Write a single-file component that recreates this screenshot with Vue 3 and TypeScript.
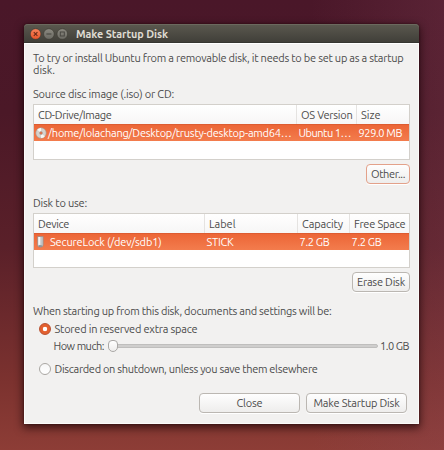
<script setup lang="ts">
import { ref, type Directive } from 'vue'

// Tracks a label so that its text spans the given width in pixels.
const vFit: Directive<HTMLElement, number> = {
  mounted(el, { value }) {
    const natural = el.getBoundingClientRect().width
    const count = (el.textContent ?? '').length
    if (count > 1) el.style.letterSpacing = `${(value - natural) / count}px`
  },
}

interface Cell { text: string; width: number }
interface Table { name: string; heads: Cell[]; row: Cell[] }

const images: Table = {
  name: 'images',
  heads: [
    { text: 'CD-Drive/Image', width: 73.5 },
    { text: 'OS Version', width: 51.5 },
    { text: 'Size', width: 19.5 },
  ],
  row: [
    { text: '/home/lolachang/Desktop/trusty-desktop-amd64…', width: 243.5 },
    { text: 'Ubuntu 1…', width: 52.5 },
    { text: '929.0 MB', width: 43.5 },
  ],
}
const disks: Table = {
  name: 'disks',
  heads: [
    { text: 'Device', width: 31 },
    { text: 'Label', width: 26.5 },
    { text: 'Capacity', width: 41 },
    { text: 'Free Space', width: 51.5 },
  ],
  row: [
    { text: 'SecureLock (/dev/sdb1)', width: 111.5 },
    { text: 'STICK', width: 27 },
    { text: '7.2 GB', width: 30 },
    { text: '7.2 GB', width: 30 },
  ],
}
const storage = ref<'stored' | 'discarded'>('stored')
</script>

<template>
  <div class="desktop">
    <main class="window">
      <header class="titlebar">
        <svg class="controls" width="38" height="12" viewBox="0 0 38 12">
          <defs>
            <linearGradient id="closeFill" x1="0" y1="0" x2="0" y2="1">
              <stop offset="0" stop-color="#f8845c" /><stop offset="1" stop-color="#ea552a" />
            </linearGradient>
            <linearGradient id="dimFill" x1="0" y1="0" x2="0" y2="1">
              <stop offset="0" stop-color="#8b8980" /><stop offset="1" stop-color="#6b6a63" />
            </linearGradient>
          </defs>
          <circle cx="5.6" cy="6" r="5.3" fill="url(#closeFill)" stroke="#38332d" stroke-width=".5" />
          <path d="M3.8 4.2l3.6 3.6M7.4 4.2L3.8 7.8" stroke="#6b2a18" stroke-width="1.1" />
          <circle cx="18.9" cy="6" r="5.3" fill="url(#dimFill)" stroke="#38372f" stroke-width=".5" />
          <path d="M16.4 6h5" stroke="#484741" stroke-width="1.1" />
          <circle cx="32.3" cy="6" r="5.3" fill="url(#dimFill)" stroke="#38372f" stroke-width=".5" />
          <rect x="30.3" y="4" width="4" height="4" fill="none" stroke="#484741" />
        </svg>
        <h1><span v-fit="92">Make Startup Disk</span></h1>
      </header>

      <section class="body">
        <p class="intro">
          <span v-fit="370.5">To try or install Ubuntu from a removable disk, it needs to be set up as a startup</span><br />
          <span v-fit="22">disk.</span>
        </p>

        <p class="caption source"><span v-fit="141">Source disc image (.iso) or CD:</span></p>
        <div class="table" :class="images.name">
          <div class="head">
            <div v-for="(c, i) in images.heads" :key="i" class="th"><span v-fit="c.width">{{ c.text }}</span></div>
          </div>
          <div class="row">
            <div v-for="(c, i) in images.row" :key="i" class="td">
              <svg v-if="i === 0" class="disc" width="12" height="12" viewBox="0 0 12 12">
                <circle cx="6" cy="6" r="5.2" fill="#d5d2cd" stroke="#a59c94" stroke-width=".6" />
                <path d="M6 6L2.2 2.6A5 5 0 0 1 6 1zM6 6l3.8 3.4A5 5 0 0 1 6 11z" fill="#f7f6f4" />
                <circle cx="6" cy="6" r="1.5" fill="#e8673c" stroke="#b5aaa2" stroke-width=".8" />
              </svg>
              <span v-fit="c.width">{{ c.text }}</span>
            </div>
          </div>
        </div>
        <div class="action other"><button class="focused"><span v-fit="34">Other...</span></button></div>

        <p class="caption"><span v-fit="54">Disk to use:</span></p>
        <div class="table" :class="disks.name">
          <div class="head">
            <div v-for="(c, i) in disks.heads" :key="i" class="th"><span v-fit="c.width">{{ c.text }}</span></div>
          </div>
          <div class="row">
            <div v-for="(c, i) in disks.row" :key="i" class="td">
              <svg v-if="i === 0" class="stick" width="7" height="12" viewBox="0 0 7 12">
                <path d="M.6.6h5.6v8.2Q6.200 11.200 3.400 11.200T.6 8.800z" fill="#c3c5c6" stroke="#8f8a87" stroke-width=".6" />
                <path d="M2.300 1v7.900" stroke="#f4f5f5" stroke-width="2" />
                <path d="M2 10h2.800" stroke="#626b72" stroke-width=".9" />
              </svg>
              <span v-fit="c.width">{{ c.text }}</span>
            </div>
          </div>
        </div>
        <div class="action erase"><button><span v-fit="48">Erase Disk</span></button></div>

        <p class="caption question"><span v-fit="298.5">When starting up from this disk, documents and settings will be:</span></p>
        <label class="option">
          <input v-model="storage" type="radio" value="stored" />
          <span v-fit="143">Stored in reserved extra space</span>
        </label>
        <div class="amount">
          <span v-fit="50.500">How much:</span>
          <div class="slider"><i class="knob"></i></div>
          <span v-fit="29">1.0 GB</span>
        </div>
        <label class="option discard">
          <input v-model="storage" type="radio" value="discarded" />
          <span v-fit="263">Discarded on shutdown, unless you save them elsewhere</span>
        </label>

        <footer>
          <button><span v-fit="26">Close</span></button>
          <button><span v-fit="86">Make Startup Disk</span></button>
        </footer>
      </section>
    </main>
  </div>
</template>

<style>
body { margin: 0; }
</style>

<style scoped>
* { box-sizing: border-box; }
.desktop {
  width: 444px;
  height: 450px;
  padding: 24px 0 0 24px;
  overflow: hidden;
  font: 11px/12px Ubuntu, "Noto Sans", sans-serif;
  color: #4c4c4c;
  background:
    linear-gradient(90deg, transparent 70%, rgba(145, 76, 96, .22)),
    linear-gradient(180deg, #4a1729 0%, #4b1827 25%, #5a2029 55%, #7c322f 85%, #8d3d36 100%);
}
.window {
  width: 395px;
  height: 400px;
  border-radius: 4px 4px 0 0;
  box-shadow: 0 3px 9px 1px rgba(20, 0, 5, .65), 0 0 2px rgba(20, 0, 5, .6);
}
.titlebar {
  display: flex;
  align-items: center;
  height: 19px;
  padding-left: 5.5px;
  border-radius: 4px 4px 0 0;
  border-bottom: 1px solid #353530;
  background: linear-gradient(#5b594f, #403f39);
  box-shadow: inset 0 1px #6b695e;
}
.controls { display: block; margin-top: 1px; }
h1 {
  margin: 1px 0 0 8.5px;
  font-size: 10.8px;
  line-height: 12px;
  font-weight: 700;
  color: #dfdbd2;
}
span { white-space: nowrap; display: inline-block; }
.body {
  height: 381px;
  padding: 8px 9px 0 8px;
  background: #f2f1f0;
  border: 1px solid #fbfbfa;
  border-top: 1px solid #fff;
}
.intro { margin: 0; height: 24px; }
.caption { margin: 0; height: 12px; }
.source { margin-top: 12px; }
.table {
  width: 377px;
  background: #fff;
  border: 1px solid #d3d0cb;
}
.images { height: 56px; margin-top: 4px; }
.disks { height: 55px; margin-top: 4px; }
.head, .row { display: grid; }
.images .head, .images .row { grid-template-columns: 262px 60px 1fr; }
.disks .head, .disks .row { grid-template-columns: 170px 93px 52px 1fr; }
.head { height: 19px; background: linear-gradient(#fff, #f7f6f6); }
.th { padding: 4px 0 0 4px; border-left: 1px solid #e5e3e1; }
.th:first-child { padding-left: 3px; border-left-color: transparent; }
.row {
  height: 17px;
  color: #fff;
  background: linear-gradient(#ec6637, #f37c4d);
  border-top: 1px solid #dd5c31;
}
.td { display: flex; align-items: flex-start; padding: 2px 0 0 2.5px; }
.td:first-child { padding-left: .5px; }
.disc { margin: 0 1.500px 0 0; }
.stick { margin: 0 6px 0 2.500px; }
.action { display: flex; justify-content: flex-end; width: 377px; }
button {
  display: flex;
  align-items: center;
  justify-content: center;
  height: 20px;
  padding: 0;
  font: inherit;
  color: inherit;
  border: 1px solid #bbb7b2;
  border-radius: 4px;
  background: linear-gradient(#fefefe, #eeedec);
  box-shadow: 0 1px #fff;
}
.other { margin-top: 4px; height: 33px; }
.other button { width: 44px; }
.focused { border-color: #e3a18a; }
.erase { margin-top: 4px; height: 33px; }
.erase button { width: 58px; }
.option {
  display: flex;
  align-items: center;
  height: 12px;
  margin: 6px 0 0 6px;
}
.option input {
  appearance: none;
  width: 12px;
  height: 12px;
  margin: 0 3.500px 0 0;
  border: 1px solid #aaa7a3;
  border-radius: 50%;
  background: linear-gradient(#f7f7f7, #fff);
}
.option input:checked {
  border-color: #b9502f;
  background: radial-gradient(circle, #fff 0 1.900px, #e3602f 2.600px 5px);
}
.amount {
  display: flex;
  align-items: center;
  height: 12px;
  margin: 5px 0 0 20.500px;
}
.slider {
  display: flex;
  align-items: center;
  width: 272px;
  height: 4px;
  margin: -1px 2.500px 0 4px;
  border: 1px solid #bfbebd;
  border-radius: 2px;
  background: #cfcecd;
}
.knob {
  width: 10px;
  height: 12px;
  flex: none;
  margin-left: -1px;
  border: 1px solid #aaa8a6;
  border-radius: 4px 4px 5px 5px;
  background: linear-gradient(#fff, #eeedec);
}
.amount > span:last-child { position: static; }
.discard { margin-top: 11px; }
footer { display: flex; gap: 6px; margin: 18px 0 0 166px; }
footer button { width: 101px; }
</style>
